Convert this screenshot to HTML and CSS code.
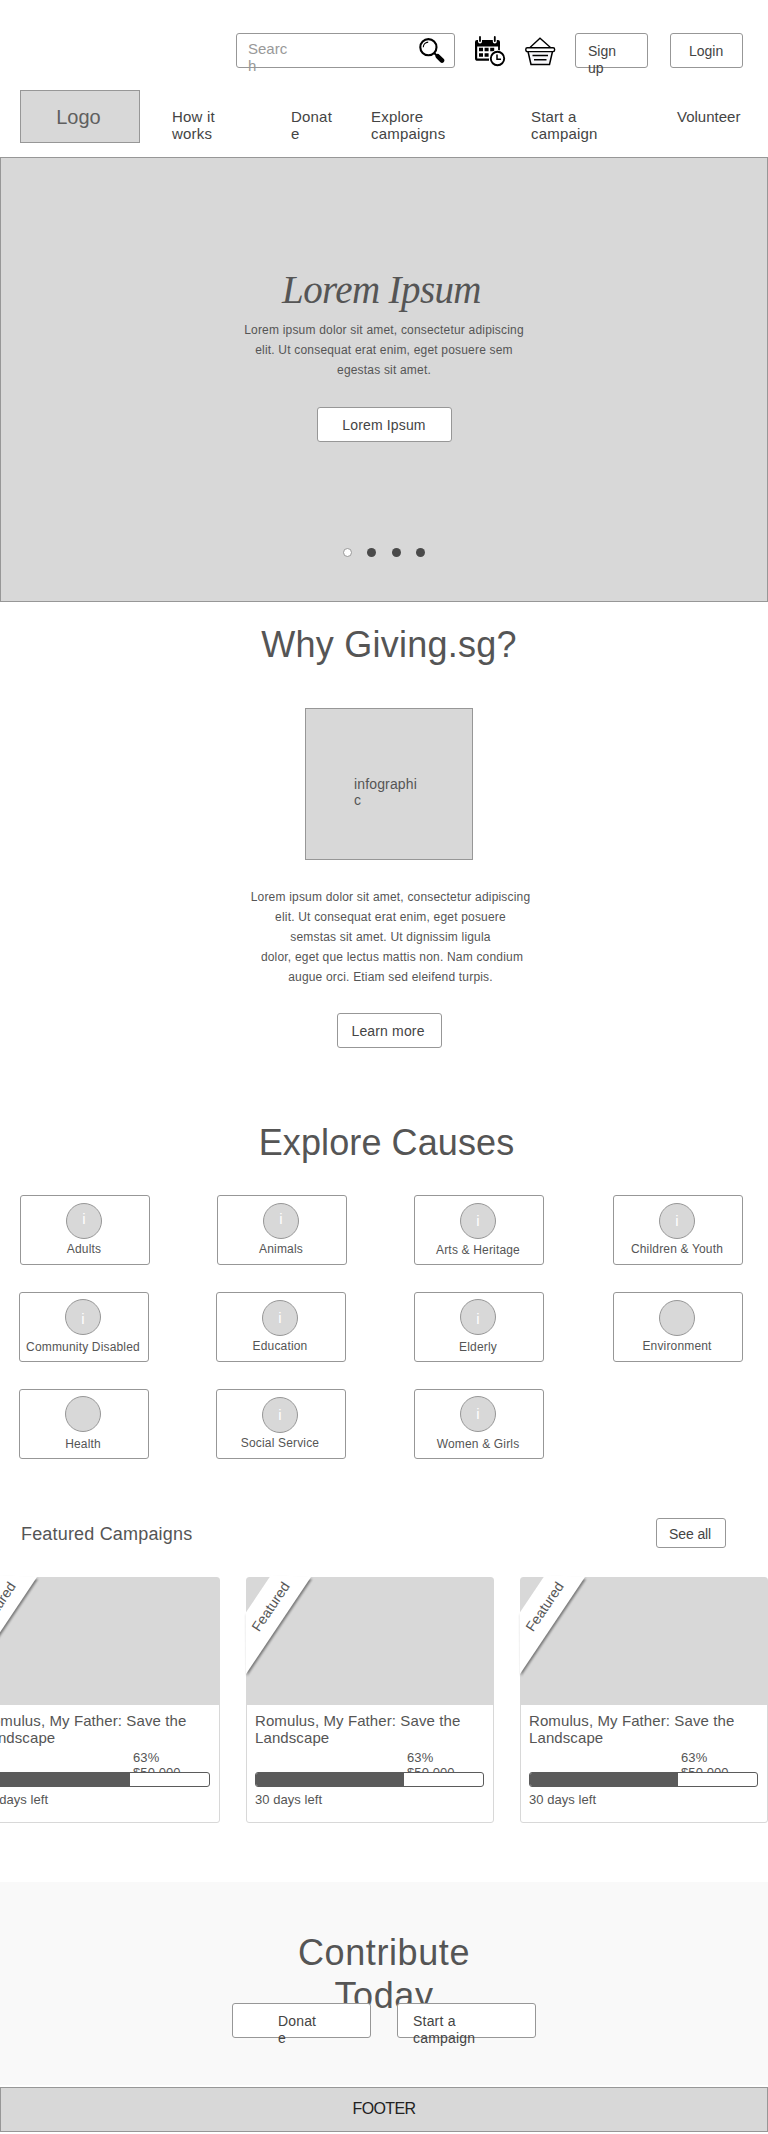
FILE: index.html
```html
<!DOCTYPE html>
<html lang="en">
<head>
<meta charset="utf-8">
<title>Giving.sg</title>
<link rel="stylesheet" href="styles.css">
</head>
<body>
<header class="header">
  <div class="toolbar">
    <div class="search">
      <span class="search-label">Searc<br>h</span>
      <svg class="search-icon" width="26" height="26" viewBox="0 0 26 26">
        <circle cx="9.4" cy="9.2" r="8.1" fill="none" stroke="#000" stroke-width="2.1"/>
        <path d="M4.3 9.2A5.2 5.2 0 0 1 9.2 4.1" fill="none" stroke="#000" stroke-width="1.1"/>
        <path d="M15.2 15l3 3" stroke="#000" stroke-width="2"/>
        <path d="M18.8 18.3l4.200 4.200" stroke="#000" stroke-width="4.600" stroke-linecap="round"/>
      </svg>
    </div>
    <svg class="calendar-icon" width="31" height="31" viewBox="0 0 31 31">
      <path d="M2 4H23a2 2 0 0 1 2 2V10.500H0V6a2 2 0 0 1 2-2z"/>
      <path d="M1.1 10V22.2a1.5 1.5 0 0 0 1.500 1.500H14" fill="none" stroke="#000" stroke-width="2.200"/>
      <path d="M24 10v5" stroke="#000" stroke-width="1.800"/>
      <path d="M5 0.500V5.500M19.800 0.500V5.500" stroke="#fff" stroke-width="4" stroke-linecap="round"/>
      <path d="M5 1V5M19.800 1V5" stroke="#000" stroke-width="1.800" stroke-linecap="round"/>
      <path d="M4 11.800h4v3.500h-4zM9.600 11.800h4v3.500h-4zM15.200 11.800h4v3.500h-4zM4 17.200h4v3.500h-4zM9.600 17.200h4v3.500h-4z"/>
      <circle cx="22.500" cy="22.500" r="8.400" fill="#fff"/>
      <circle cx="22.500" cy="22.500" r="6.700" fill="#fff" stroke="#000" stroke-width="1.900"/>
      <path d="M22 18.500V23.300H26" fill="none" stroke="#000" stroke-width="1.500"/>
    </svg>
    <svg class="basket-icon" width="31" height="30" viewBox="0 0 31 30" fill="none" stroke="#000">
      <path d="M5 10.500L15 1.200L25.500 10.500" stroke-width="1.300"/>
      <path d="M3 14.500L6 27.500H24.500L27.500 14.500" fill="#f7f7fa" stroke-width="1.500"/>
      <rect x=".8" y="10.800" width="28.800" height="3.800" rx="1.500" fill="#fff" stroke-width="1.400"/>
      <path d="M7.500 18.500H23M9 22.800H21.500" stroke-width="1.500"/>
    </svg>
    <a class="button signup">Sign<br>up</a>
    <a class="button login">Login</a>
  </div>
  <div class="masthead">
    <div class="logo">Logo</div>
    <nav class="nav">
      <a class="nav-how">How it<br>works</a>
      <a class="nav-donate">Donat<br>e</a>
      <a class="nav-explore">Explore<br>campaigns</a>
      <a class="nav-start">Start a<br>campaign</a>
      <a class="nav-volunteer">Volunteer</a>
    </nav>
  </div>
</header>

<section class="hero">
  <h1 class="hero-title">Lorem Ipsum</h1>
  <p class="copy hero-copy">Lorem ipsum dolor sit amet, consectetur adipiscing<br>elit. Ut consequat erat enim, eget posuere sem<br>egestas sit amet.</p>
  <a class="button hero-button">Lorem Ipsum</a>
  <div class="dots"><i class="dot dot-active"></i><i class="dot"></i><i class="dot"></i><i class="dot"></i></div>
</section>

<section class="why">
  <h2 class="heading">Why Giving.sg?</h2>
  <div class="infographic">infographi<br>c</div>
  <p class="copy why-copy">Lorem ipsum dolor sit amet, consectetur adipiscing<br>elit. Ut consequat erat enim, eget posuere<br>semstas sit amet. Ut dignissim ligula<br><span class="long-line">dolor, eget que lectus mattis non. Nam condium</span><br>augue orci. Etiam sed eleifend turpis.</p>
  <a class="button learn">Learn more</a>
</section>

<section class="causes">
  <h2 class="heading causes-heading">Explore Causes</h2>
  <div class="cause-grid">
    <div class="cause"><span class="badge badge-up">i</span><span class="label">Adults</span></div>
    <div class="cause"><span class="badge badge-up">i</span><span class="label">Animals</span></div>
    <div class="cause"><span class="badge">i</span><span class="label label-low">Arts &amp; Heritage</span></div>
    <div class="cause"><span class="badge">i</span><span class="label">Children &amp; Youth</span></div>
    <div class="cause cause-tall cause-left"><span class="badge badge-down">i</span><span class="label">Community Disabled</span></div>
    <div class="cause cause-left"><span class="badge">i</span><span class="label">Education</span></div>
    <div class="cause cause-tall"><span class="badge badge-down">i</span><span class="label">Elderly</span></div>
    <div class="cause"><span class="badge"></span><span class="label">Environment</span></div>
    <div class="cause cause-tall cause-left"><span class="badge"></span><span class="label">Health</span></div>
    <div class="cause cause-left"><span class="badge">i</span><span class="label">Social Service</span></div>
    <div class="cause cause-tall"><span class="badge">i</span><span class="label">Women &amp; Girls</span></div>
  </div>
</section>

<section class="featured">
  <div class="featured-head">
    <h3 class="featured-title">Featured Campaigns</h3>
    <a class="button see-all">See all</a>
  </div>
  <div class="campaigns">
    <article class="campaign">
      <div class="photo"></div>
      <svg class="ribbon" width="76" height="112" viewBox="0 0 76 112"><path class="ribbon-shape" d="M29 4L69 6L4 103L3.500 42z"/><text class="ribbon-text" transform="translate(17 61.500) rotate(-56)">Featured</text></svg>
      <h4 class="campaign-title">Romulus, My Father: Save the Landscape</h4>
      <div class="amount">63%<br>$50,000</div>
      <div class="bar"><div class="bar-fill"></div></div>
      <div class="days">30 days left</div>
    </article>
    <article class="campaign">
      <div class="photo"></div>
      <svg class="ribbon" width="76" height="112" viewBox="0 0 76 112"><path class="ribbon-shape" d="M29 4L69 6L4 103L3.500 42z"/><text class="ribbon-text" transform="translate(17 61.500) rotate(-56)">Featured</text></svg>
      <h4 class="campaign-title">Romulus, My Father: Save the Landscape</h4>
      <div class="amount">63%<br>$50,000</div>
      <div class="bar"><div class="bar-fill"></div></div>
      <div class="days">30 days left</div>
    </article>
    <article class="campaign">
      <div class="photo"></div>
      <svg class="ribbon" width="76" height="112" viewBox="0 0 76 112"><path class="ribbon-shape" d="M29 4L69 6L4 103L3.500 42z"/><text class="ribbon-text" transform="translate(17 61.500) rotate(-56)">Featured</text></svg>
      <h4 class="campaign-title">Romulus, My Father: Save the Landscape</h4>
      <div class="amount">63%<br>$50,000</div>
      <div class="bar"><div class="bar-fill"></div></div>
      <div class="days">30 days left</div>
    </article>
  </div>
</section>

<section class="contribute">
  <h2 class="heading contribute-heading">Contribute<br>Today</h2>
  <div class="contribute-actions">
    <a class="button donate">Donat<br>e</a>
    <a class="button start">Start a<br>campaign</a>
  </div>
</section>
<footer class="footer">FOOTER</footer>
</body>
</html>
```
FILE: styles.css
```css
* { box-sizing: border-box; }

body {
  margin: 0;
  width: 768px;
  height: 2134px;
  overflow: hidden;
  background: #fff;
  color: #555;
  font-family: "Liberation Sans", Arial, sans-serif;
}

h1, h2, h3, h4, p { margin: 0; font-weight: 400; }
svg { display: block; flex: none; }

.button {
  display: block;
  flex: none;
  height: 35px;
  padding-top: 9px;
  border: 1px solid #979797;
  border-radius: 3px;
  background: #fff;
  color: #444;
  font-size: 14px;
  line-height: 17px;
  letter-spacing: .15px;
  white-space: nowrap;
}

/* Header */
.header { height: 157px; padding-top: 33px; }
.toolbar { display: flex; height: 35px; padding-left: 236px; }
.search {
  display: flex;
  justify-content: space-between;
  width: 219px;
  padding: 6px 9px 0 11px;
  border: 1px solid #979797;
  border-radius: 3px;
  color: #999;
  font-size: 15px;
  line-height: 17px;
}
.search-icon { margin-top: -2px; }
.calendar-icon { margin: 3px 0 0 20px; }
.basket-icon { margin: 4px 0 0 19px; }
.signup { width: 73px; margin-left: 19px; padding-left: 12px; letter-spacing: 0; }
.login { width: 73px; margin-left: 22px; padding-left: 18px; letter-spacing: 0; }

.masthead { display: flex; margin-top: 22px; padding-left: 20px; }
.logo {
  width: 120px;
  height: 53px;
  padding: 14px 3px 0 0;
  border: 1px solid #979797;
  background: #d8d8d8;
  color: #5f5f5f;
  font-size: 20px;
  line-height: 24px;
  text-align: center;
}
.nav {
  display: flex;
  padding: 18px 0 0 32px;
  color: #444;
  font-size: 15px;
  line-height: 17px;
  letter-spacing: .2px;
}
.nav-how { width: 119px; }
.nav-donate { width: 80px; }
.nav-explore { width: 160px; }
.nav-start { width: 146px; }
.nav-volunteer { letter-spacing: 0; }

/* Hero */
.hero {
  display: flex;
  flex-direction: column;
  align-items: center;
  height: 445px;
  padding-top: 110px;
  border: 1px solid #979797;
  background: #d8d8d8;
}
.hero-title {
  margin-right: 5px;
  font-family: "Liberation Serif", "Times New Roman", serif;
  font-style: italic;
  font-size: 39px;
  line-height: 44px;
  letter-spacing: -.6px;
}
.copy {
  font-size: 12px;
  line-height: 20px;
  letter-spacing: .19px;
  text-align: center;
}
.hero-copy { margin-top: 8px; }
.hero-button { width: 135px; margin-top: 27px; text-align: center; }
.dots { display: flex; gap: 15.500px; margin-top: 106px; }
.dot { width: 9px; height: 9px; border-radius: 50%; background: #4a4a4a; }
.dot-active { border: 1px solid #979797; background: #fff; }

/* Why */
.why {
  display: flex;
  flex-direction: column;
  align-items: center;
  padding: 22px 0 0 10px;
}
.heading {
  font-size: 36px;
  line-height: 42px;
  letter-spacing: .25px;
  text-align: center;
}
.infographic {
  width: 168px;
  height: 152px;
  margin-top: 42px;
  padding: 67px 0 0 48px;
  border: 1px solid #979797;
  background: #d8d8d8;
  font-size: 14px;
  line-height: 16px;
  letter-spacing: .15px;
}
.why-copy { margin: 27px 0 0 3px; }
.long-line { padding-left: 3px; }
.learn { width: 105px; margin-top: 26px; padding-left: 14px; }

/* Causes */
.causes { padding-top: 74px; }
.causes-heading { padding-left: 5px; letter-spacing: .1px; }
.cause-grid {
  display: grid;
  grid-template-columns: 197px 197px 199px 130px;
  grid-auto-rows: 70px;
  row-gap: 27px;
  margin-top: 31px;
  padding-left: 20px;
}
.cause {
  display: flex;
  flex-direction: column;
  align-items: center;
  width: 130px;
  height: 70px;
  padding: 7px 2px 0 0;
  border: 1px solid #979797;
  border-radius: 3px;
}
.cause-tall { padding-top: 6px; }
.cause-left { margin-left: -1px; }
.badge {
  width: 36px;
  height: 36px;
  flex: none;
  padding-top: 8px;
  border: 1px solid #979797;
  border-radius: 50%;
  background: #d8d8d8;
  color: #fff;
  font-size: 15px;
  line-height: 17px;
  text-align: center;
}
.badge-up { padding-top: 6px; }
.badge-down { padding-top: 10px; }
.label {
  margin-top: 3px;
  font-size: 12px;
  line-height: 15px;
  letter-spacing: .17px;
  white-space: nowrap;
}
.label-low { margin-top: 4px; }
.cause-tall .label { margin-top: 5px; }

/* Featured campaigns */
.featured { padding-top: 59px; }
.featured-head {
  display: flex;
  justify-content: space-between;
  padding: 0 42px 0 21px;
}
.featured-title {
  padding-top: 5px;
  font-size: 18px;
  line-height: 22px;
  letter-spacing: .18px;
}
.see-all { width: 70px; height: 30px; padding: 7px 0 0 12px; letter-spacing: -.1px; }
.campaigns { display: flex; gap: 26px; margin: 29px 0 0 -28px; }
.campaign {
  position: relative;
  flex: none;
  width: 248px;
  height: 246px;
  padding: 0 8px;
  border: 1px solid #d8d8d8;
  border-radius: 3px;
}
.photo { height: 127px; margin: 0 -8px; background: #d8d8d8; }
.ribbon { position: absolute; left: -5px; top: -7px; }
.ribbon-shape { fill: #fff; filter: drop-shadow(1px 2px 1px rgba(0, 0, 0, .45)); }
.ribbon-text { fill: #555; font-size: 14px; }
.campaign-title {
  margin-top: 7px;
  font-size: 15px;
  line-height: 17px;
  letter-spacing: .1px;
}
.amount {
  height: 26px;
  padding: 4px 0 0 152px;
  font-size: 13px;
  line-height: 15px;
  letter-spacing: .1px;
}
.bar {
  position: relative;
  width: 229px;
  height: 15px;
  overflow: hidden;
  border: 1px solid #5b5b5b;
  border-radius: 3px;
  background: #fff;
}
.bar-fill { width: 148px; height: 13px; background: #5b5b5b; }
.days { margin-top: 5px; font-size: 13px; line-height: 15px; letter-spacing: .05px; }

/* Contribute */
.contribute {
  height: 203px;
  margin-top: 59px;
  padding-top: 49px;
  background: #f9f9f9;
}
.contribute-heading { line-height: 43px; letter-spacing: .6px; }
.contribute-actions {
  position: relative;
  display: flex;
  gap: 26px;
  margin-top: -14px;
  padding-left: 232px;
}
.donate { width: 139px; padding-left: 45px; }
.start { width: 139px; padding-left: 15px; letter-spacing: .2px; }

.footer {
  height: 45px;
  margin-top: 2px;
  padding-top: 12px;
  border: 1px solid #979797;
  background: #d8d8d8;
  color: #222;
  font-size: 16px;
  line-height: 18px;
  letter-spacing: -.6px;
  text-align: center;
}
```
